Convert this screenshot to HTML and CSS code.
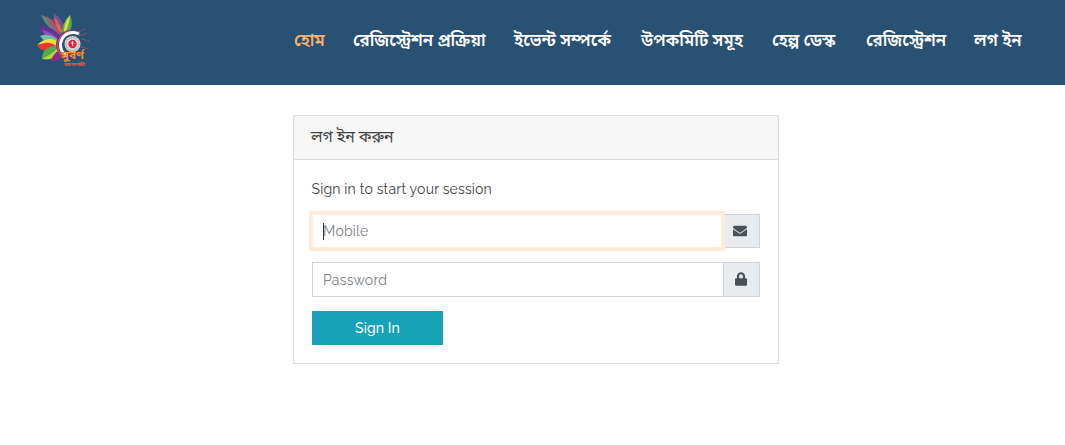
FILE: index.html
```html
<!DOCTYPE html>
<html lang="bn">
<head>
<meta charset="utf-8">
<title>লগ ইন</title>
<link rel="stylesheet" href="styles.css">
</head>
<body>
<header class="header">
  <a class="logo" href="#" aria-label="হোম">
    <svg width="54" height="56" viewBox="0 0 54 56">
      <path d="M5 3Q15 5 25 24Q10 16 5 3Z" fill="#5c8a78"/>
      <path d="M10 4Q19 8 27 25Q14 17 10 4Z" fill="#a35872"/>
      <path d="M17 1Q29 7 29 25Q18 16 17 1Z" fill="#7a4c9c"/>
      <path d="M18 5Q25 12 27 23Q19 16 18 5Z" fill="#e56b43"/>
      <path d="M34 3Q39 14 31 23L26 25Q25 11 34 3Z" fill="#58ac4c"/>
      <path d="M34 3Q33 15 28 23Q27 12 34 3Z" fill="#d8dc42"/>
      <path d="M2 14Q17 13 26 26L22 31Q8 27 2 14Z" fill="#623394"/>
      <path d="M6 18Q17 20 24 29L21 31Q10 27 6 18Z" fill="#8853b0"/>
      <path d="M4 24Q14 20 24 30L21 34Q10 33 4 24Z" fill="#74bfae"/>
      <path d="M1 33Q12 22 24 31L21 37Q10 30 1 33Z" fill="#efdf3b"/>
      <path d="M1 34Q12 27 22 35L20 39Q9 42 1 34Z" fill="#ea3835"/>
      <path d="M6 47Q6 34 21 34L24 40Q17 48 6 47Z" fill="#50ad43"/>
      <path d="M6 47Q13 44 22 36L24 41Q17 49 6 47Z" fill="#b7d443"/>
      <path d="M15 49Q17 41 24 38L27 44Q23 50 15 49Z" fill="#8d2d88"/>
      <path d="M38 17Q21 19 20 32Q20 43 31 47L36 44Q26 41 25 33Q26 24 40 21Z" fill="#3342a0"/>
      <path d="M43 21A13 13 0 1 0 29 46" fill="none" stroke="#e83f46" stroke-width="1.5"/>
      <path d="M43 22A12 12 0 1 0 31 44" fill="none" stroke="#fff" stroke-width="3"/>
      <circle cx="36.500" cy="32" r="8" fill="#d5dcd9"/>
      <circle cx="36.500" cy="32" r="6.500" fill="none" stroke="#b8706e" stroke-width="1" stroke-dasharray="1 1"/>
      <circle cx="36.500" cy="32" r="4.2" fill="#e3213b"/>
      <path d="M36.500 29V34M35 31H38" stroke="#fff" stroke-width=".8"/>
      <path d="M16 8L24 13M42 20L49 17M46 27L53 29M45 35L52 37M43 24L51 21" stroke="#b94c73" stroke-width="1" stroke-dasharray="2 1"/>
      <text class="logo-title" x="25" y="47" textLength="23" lengthAdjust="spacingAndGlyphs">সুবর্ণ</text>
      <text class="logo-sub" x="28" y="54" textLength="21" lengthAdjust="spacingAndGlyphs">জয়ন্তী</text>
    </svg>
  </a>
  <nav class="nav">
    <a class="nav-link home active" href="#">হোম</a>
    <a class="nav-link process" href="#">রেজিস্ট্রেশন প্রক্রিয়া</a>
    <a class="nav-link event" href="#">ইভেন্ট সম্পর্কে</a>
    <a class="nav-link committee" href="#">উপকমিটি সমূহ</a>
    <a class="nav-link help" href="#">হেল্প ডেস্ক</a>
    <a class="nav-link register" href="#">রেজিস্ট্রেশন</a>
    <a class="nav-link login" href="#">লগ ইন</a>
  </nav>
</header>
<main class="card">
  <div class="card-header">লগ ইন করুন</div>
  <form class="card-body">
    <p class="message">Sign in to start your session</p>
    <div class="input-group first">
      <div class="control focused"><span class="caret"></span><span class="mobile">Mobile</span></div>
      <span class="addon"><svg width="14" height="14" viewBox="0 0 512 512"><path fill="currentColor" d="M502.3 190.8c3.9-3.1 9.7-.2 9.7 4.7V400c0 26.5-21.500 48-48 48H48c-26.500 0-48-21.500-48-48V195.600c0-5 5.700-7.800 9.700-4.700 22.400 17.400 52.100 39.500 154.100 113.600 21.100 15.400 56.700 47.800 92.200 47.600 35.700.3 72-32.800 92.300-47.600 102-74.100 131.600-96.300 154-113.700zM256 320c23.200.4 56.600-29.200 73.400-41.400 132.700-96.300 142.800-104.700 173.400-128.700 5.800-4.500 9.200-11.500 9.200-18.900v-19c0-26.500-21.500-48-48-48H48c-26.500 0-48 21.500-48 48v19c0 7.400 3.400 14.300 9.200 18.900 30.600 23.900 40.700 32.400 173.400 128.700 16.800 12.200 50.200 41.800 73.400 41.400z"/></svg></span>
    </div>
    <div class="input-group second">
      <div class="control"><span class="password">Password</span></div>
      <span class="addon"><svg width="12" height="14" viewBox="0 0 448 512"><path fill="currentColor" d="M400 224h-24v-72C376 68.200 307.800 0 224 0S72 68.200 72 152v72H48c-26.500 0-48 21.500-48 48v192c0 26.500 21.500 48 48 48h352c26.500 0 48-21.500 48-48V272c0-26.500-21.500-48-48-48zm-104 0H152v-72c0-39.700 32.300-72 72-72s72 32.300 72 72v72z"/></svg></span>
    </div>
    <button class="submit" type="button">Sign In</button>
  </form>
</main>
</body>
</html>
```
FILE: styles.css
```css
* { box-sizing: border-box; }
body { margin: 0; background: #fff; color: #444; font: 14px/21px Raleway, Lato, "Noto Sans Bengali", "Noto Sans", sans-serif; }
.header { height: 85px; padding: 12px 44px 0 36px; background: #285174; display: flex; justify-content: space-between; }
.logo { display: block; height: 56px; }
.logo svg { display: block; }
.logo-title { font-size: 11px; font-weight: 700; fill: #f48b29; }
.logo-sub { font-size: 5px; font-weight: 700; fill: #e95631; }
.nav { display: flex; gap: 26px; padding-top: 16px; }
.nav-link { color: #fff; font-size: 16.9px; font-weight: 600; line-height: 24px; white-space: nowrap; text-decoration: none; }
.active { color: #f9b16e; }
.home { width: 33px; }
.process { width: 135px; }
.event { width: 101px; }
.committee { width: 105px; }
.help { width: 68px; }
.register { width: 82px; }
.login { width: 47px; }
.card { width: 486px; height: 249px; margin: 30px 0 0 293px; border: 1px solid #dfdfdf; }
.card-header { height: 44px; padding: 10px 17px; border-bottom: 1px solid #dcdcdc; background: #f7f7f7; font-size: 15.8px; }
.card-body { padding: 19px 18px 18px; }
.message { margin: 0 0 14px -.5px; font-size: 14px; letter-spacing: .18px; }
.input-group { display: flex; height: 35px; }
.first { height: 34px; }
.second { margin-top: 14px; }
.control { display: flex; align-items: center; width: 412px; padding: 0 10px; border: 1px solid #ced4da; color: #7b8288; letter-spacing: .22px; }
.second .control { padding-top: 1px; }
.focused { position: relative; width: 410px; border-color: #fdf0e2; box-shadow: 0 0 0 3px #fcebd9; }
.caret { width: 1px; height: 17px; background: #333; }
.mobile { margin-left: -1px; }
.addon { display: grid; place-items: center; flex: 1; padding-right: 1px; padding-bottom: 1px; border: 1px solid #ced4da; border-left: 0; background: #e9ecef; color: #495057; }
.second .addon { border-left: 0; }
.submit { display: block; width: 131px; height: 34px; margin-top: 14px; padding: 0; border: 0; background: #17a2b8; color: #fff; font: inherit; font-weight: 500; letter-spacing: .1px; }
```
